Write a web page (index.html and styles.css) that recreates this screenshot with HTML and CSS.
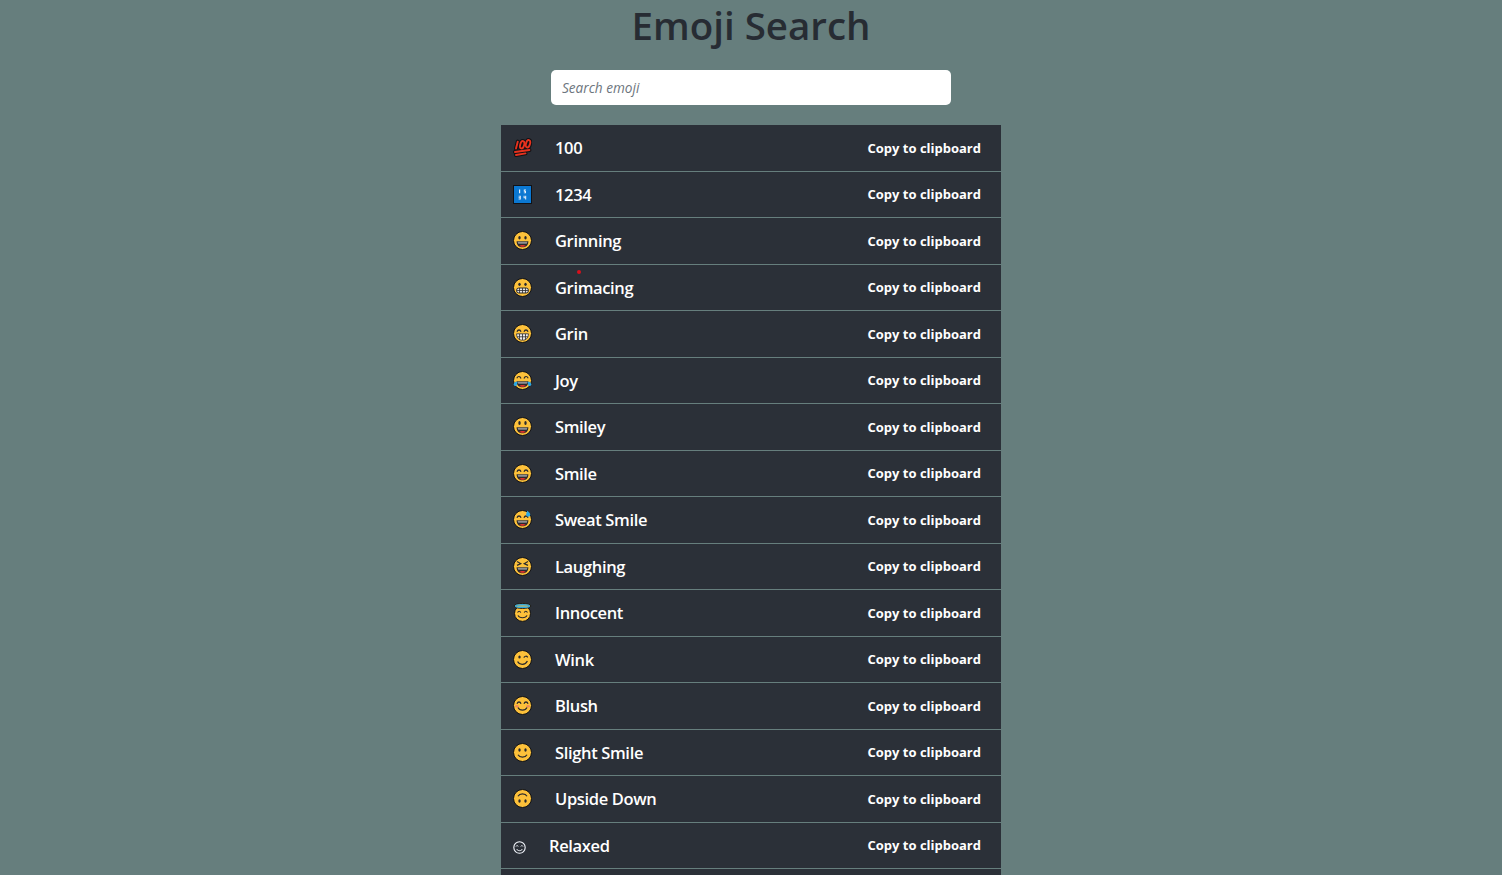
FILE: index.html
```html
<!DOCTYPE html>
<html lang="en">
<head>
<meta charset="utf-8">
<title>Emoji Search</title>
<link rel="stylesheet" href="styles.css">
</head>
<body>
<svg class="defs" width="0" height="0" aria-hidden="true">
  <defs>
    <g id="face"><circle cx="9.5" cy="9.5" r="9" fill="#fdc13a" stroke="#111216" stroke-width="1"/></g>
    <g id="open-mouth"><path d="M3.6 10.2H15.4C15.4 14.6 12.8 16.2 9.5 16.2S3.6 14.6 3.6 10.2Z" fill="#2b2a2c"/><path d="M4.6 10.8H14.4L13.8 12.8H5.2Z" fill="#8f8f92"/><path d="M6.3 15C7.2 13.7 11.8 13.7 12.7 15 11.5 16 7.5 16 6.3 15Z" fill="#e0322c"/></g>
    <g id="arc-eyes"><path d="M4 7.8C4.9 5.4 7.1 5.4 8 7.8M11 7.8C11.9 5.4 14.1 5.4 15 7.8" fill="none" stroke="#2b2a2c" stroke-width="1.3"/></g>
    <symbol id="e100" viewBox="0 0 19 19">
      <g fill="none" stroke="#111216" stroke-width="4" stroke-linecap="round"><path d="M4.8 3.6 3 10.6"/><ellipse cx="9.2" cy="6.8" rx="2" ry="3.8" transform="rotate(16 9.2 6.8)"/><ellipse cx="15" cy="5.8" rx="2" ry="3.8" transform="rotate(16 15 5.8)"/><path d="M2 14 16.4 12M3 17 12.5 15.4"/></g>
      <g fill="none" stroke="#e8321e" stroke-width="1.9" stroke-linecap="round"><path d="M4.8 3.6 3 10.6"/><ellipse cx="9.2" cy="6.8" rx="2" ry="3.8" transform="rotate(16 9.2 6.8)"/><ellipse cx="15" cy="5.8" rx="2" ry="3.8" transform="rotate(16 15 5.8)"/><path d="M2 14 16.4 12M3 17 12.5 15.4"/></g>
    </symbol>
    <symbol id="e1234" viewBox="0 0 19 19">
      <rect x=".5" y=".5" width="18" height="18" fill="#0b78d2" stroke="#111216"/>
      <g fill="#e8f2fb"><path d="M6 4.6H7.2V8.2H6ZM10.8 4.6H13V5.4H11.8V6H13V8.2H10.8V7.4H12V6.8H10.8Z"/><path d="M5.6 10.8H7.8V14.4H5.6V13.6H6.8V13H5.6V12.2H6.8V11.6H5.6ZM10.6 10.8H11.6V12.4H12.2V10.8H13.2V14.4H12.2V13.2H10.6Z"/></g>
    </symbol>
    <symbol id="grinning" viewBox="0 0 19 19"><use href="#face"/><ellipse cx="6.5" cy="6.8" rx="1.2" ry="1.7" fill="#2b2a2c"/><ellipse cx="12.5" cy="6.8" rx="1.2" ry="1.7" fill="#2b2a2c"/><use href="#open-mouth"/></symbol>
    <symbol id="grimacing" viewBox="0 0 19 19"><use href="#face"/><ellipse cx="6.5" cy="6.3" rx="1.2" ry="1.6" fill="#2b2a2c"/><ellipse cx="12.5" cy="6.3" rx="1.2" ry="1.6" fill="#2b2a2c"/><rect x="3.6" y="10" width="11.8" height="5" rx="2.2" fill="#e8e8e8" stroke="#2b2a2c"/><path d="M3.6 12.5H15.4M6.5 10V15M9.5 10V15M12.5 10V15" stroke="#2b2a2c" stroke-width=".8"/></symbol>
    <symbol id="grin" viewBox="0 0 19 19"><use href="#face"/><use href="#arc-eyes"/><path d="M3.6 9.8H15.4C15.4 14 13 16.2 9.5 16.2S3.6 14 3.6 9.8Z" fill="#ececec" stroke="#2b2a2c" stroke-width=".8"/><path d="M4 12.8H15M6.5 10V15.6M9.5 10V16M12.5 10V15.6" stroke="#2b2a2c" stroke-width=".8"/></symbol>
    <symbol id="joy" viewBox="0 0 19 19"><use href="#face"/><path d="M3.8 7.2C5 4.8 7 5 8 7.4M11 7.4C12 5 14 4.8 15.2 7.2" fill="none" stroke="#2b2a2c" stroke-width="1.2"/><use href="#open-mouth"/><path d="M.6 13.2C1.8 9.8 3.8 10.8 4.6 11L3.6 14.8C2.4 15.4 1 15 .6 13.2ZM18.4 13.2C17.2 9.8 15.2 10.8 14.4 11L15.4 14.8C16.6 15.4 18 15 18.4 13.2Z" fill="#2aa7e4"/></symbol>
    <symbol id="smiley" viewBox="0 0 19 19"><use href="#face"/><ellipse cx="6.5" cy="6" rx="1.2" ry="2.1" fill="#2b2a2c"/><ellipse cx="12.5" cy="6" rx="1.2" ry="2.1" fill="#2b2a2c"/><use href="#open-mouth"/></symbol>
    <symbol id="smile" viewBox="0 0 19 19"><use href="#face"/><use href="#arc-eyes"/><use href="#open-mouth"/></symbol>
    <symbol id="sweat" viewBox="0 0 19 19"><use href="#face"/><use href="#arc-eyes"/><use href="#open-mouth"/><path d="M14.4 .8C16.2 2.4 17.8 3.8 17.2 5.6 16.6 7 14.4 7.2 13.4 5.8 12.6 4.4 13.6 2.6 14.4 .8Z" fill="#2aa7e4"/></symbol>
    <symbol id="laughing" viewBox="0 0 19 19"><use href="#face"/><path d="M4 4.4 7.8 6.6 4 8.4M15 4.4 11.2 6.6 15 8.4" fill="none" stroke="#2b2a2c" stroke-width="1.2"/><use href="#open-mouth"/></symbol>
    <symbol id="innocent" viewBox="0 0 19 19"><circle cx="9.5" cy="10.4" r="8" fill="#fdc13a" stroke="#111216"/><ellipse cx="9.5" cy="3" rx="8.4" ry="2.4" fill="#fdc13a" stroke="#111216"/><ellipse cx="9.5" cy="3" rx="7" ry="1.3" fill="none" stroke="#2aa7e4" stroke-width="1.4"/><path d="M4.6 9.6C5.3 7.8 7 7.8 7.8 9.6M11.2 9.6C12 7.8 13.7 7.8 14.4 9.6M5 12.4C6.4 15.6 12.6 15.6 14 12.4" fill="none" stroke="#2b2a2c" stroke-width="1.1"/></symbol>
    <symbol id="wink" viewBox="0 0 19 19"><use href="#face"/><ellipse cx="6.5" cy="7" rx="1.2" ry="1.6" fill="#2b2a2c"/><path d="M10.8 7.6C11.8 5.8 13.6 5.8 14.8 7.4M4.6 11.6C6.2 15.2 12.4 15.4 14.4 11" fill="none" stroke="#2b2a2c" stroke-width="1.2"/></symbol>
    <symbol id="blush" viewBox="0 0 19 19"><use href="#face"/><ellipse cx="3.9" cy="10.2" rx="1.8" ry="1.2" fill="#f08a5a"/><ellipse cx="15.1" cy="10.2" rx="1.8" ry="1.2" fill="#f08a5a"/><use href="#arc-eyes"/><path d="M5 11.6C6.6 15 12.4 15 14 11.6" fill="none" stroke="#2b2a2c" stroke-width="1.2"/></symbol>
    <symbol id="slight" viewBox="0 0 19 19"><use href="#face"/><ellipse cx="6.5" cy="7" rx="1.2" ry="1.7" fill="#2b2a2c"/><ellipse cx="12.5" cy="7" rx="1.2" ry="1.7" fill="#2b2a2c"/><path d="M5 11.8C6.6 14.8 12.4 14.8 14 11.8" fill="none" stroke="#2b2a2c" stroke-width="1.2"/></symbol>
    <symbol id="upside" viewBox="0 0 19 19"><use href="#face"/><ellipse cx="6.5" cy="12" rx="1.2" ry="1.7" fill="#2b2a2c"/><ellipse cx="12.5" cy="12" rx="1.2" ry="1.7" fill="#2b2a2c"/><path d="M5 7.2C6.6 4.2 12.4 4.2 14 7.2" fill="none" stroke="#2b2a2c" stroke-width="1.2"/></symbol>
    <symbol id="relaxed" viewBox="0 0 13 13"><circle cx="6.5" cy="6.5" r="5.7" fill="none" stroke="#f4f7fd" stroke-width="1.1"/><path d="M3 5.4C3.6 4.4 4.6 4.4 5.2 5.4M7.8 5.4C8.4 4.4 9.4 4.4 10 5.4M3.6 8C4.8 10.2 8.2 10.2 9.4 8" fill="none" stroke="#f4f7fd" stroke-width="1"/></symbol>
  </defs>
</svg>
<main class="app">
  <h1 class="title">Emoji Search</h1>
  <div class="search"><input class="search-input" type="text" placeholder="Search emoji"></div>
  <ul class="list">
    <li class="row"><svg class="icon"><use href="#e100"/></svg><span class="name">100</span><span class="copy">Copy to clipboard</span></li>
    <li class="row"><svg class="icon"><use href="#e1234"/></svg><span class="name">1234</span><span class="copy">Copy to clipboard</span></li>
    <li class="row"><svg class="icon"><use href="#grinning"/></svg><span class="name">Grinning</span><span class="copy">Copy to clipboard</span></li>
    <li class="row"><i class="dot"></i><svg class="icon"><use href="#grimacing"/></svg><span class="name">Grimacing</span><span class="copy">Copy to clipboard</span></li>
    <li class="row"><svg class="icon"><use href="#grin"/></svg><span class="name">Grin</span><span class="copy">Copy to clipboard</span></li>
    <li class="row"><svg class="icon"><use href="#joy"/></svg><span class="name">Joy</span><span class="copy">Copy to clipboard</span></li>
    <li class="row"><svg class="icon"><use href="#smiley"/></svg><span class="name">Smiley</span><span class="copy">Copy to clipboard</span></li>
    <li class="row"><svg class="icon"><use href="#smile"/></svg><span class="name">Smile</span><span class="copy">Copy to clipboard</span></li>
    <li class="row"><svg class="icon"><use href="#sweat"/></svg><span class="name">Sweat Smile</span><span class="copy">Copy to clipboard</span></li>
    <li class="row"><svg class="icon"><use href="#laughing"/></svg><span class="name">Laughing</span><span class="copy">Copy to clipboard</span></li>
    <li class="row"><svg class="icon"><use href="#innocent"/></svg><span class="name">Innocent</span><span class="copy">Copy to clipboard</span></li>
    <li class="row"><svg class="icon"><use href="#wink"/></svg><span class="name">Wink</span><span class="copy">Copy to clipboard</span></li>
    <li class="row"><svg class="icon"><use href="#blush"/></svg><span class="name">Blush</span><span class="copy">Copy to clipboard</span></li>
    <li class="row"><svg class="icon"><use href="#slight"/></svg><span class="name">Slight Smile</span><span class="copy">Copy to clipboard</span></li>
    <li class="row"><svg class="icon"><use href="#upside"/></svg><span class="name">Upside Down</span><span class="copy">Copy to clipboard</span></li>
    <li class="row"><svg class="icon icon-small"><use href="#relaxed"/></svg><span class="name">Relaxed</span><span class="copy">Copy to clipboard</span></li>
    <li class="row"></li>
  </ul>
</main>
</body>
</html>
```
FILE: styles.css
```css
* { box-sizing: border-box; }
html, body { margin: 0; padding: 0; }
body {
  background: #667e7d;
  font-family: "Open Sans", "Noto Sans", sans-serif;
  color: #fff;
}
.defs { display: block; height: 0; }
.title {
  margin: 0;
  text-align: center;
  font-size: 38.5px;
  line-height: 50px;
  font-weight: 600;
  color: #272c33;
}
.search { display: flex; justify-content: center; margin-top: 20px; }
.search-input {
  width: 400px;
  height: 35px;
  padding: 0 11px;
  border: 0;
  border-radius: 5px;
  background: #fff;
  font-family: inherit;
  font-size: 13.6px;
  font-style: italic;
}
.search-input::placeholder { color: #6c757d; opacity: 1; }
.list {
  list-style: none;
  width: 500px;
  height: 750px;
  overflow: hidden;
  margin: 20px auto 0;
  padding: 0;
}
.row {
  position: relative;
  display: flex;
  align-items: center;
  height: 46.5px;
  padding: 0 20px 0 12px;
  background: #2b3038;
  border-bottom: 1px solid #667e7d;
}
.icon { width: 19px; height: 19px; margin-right: 23px; flex: none; }
.icon-small { width: 13px; height: 13px; margin: 4px 23px 0 0; }
.name { font-size: 16.5px; font-weight: 600; letter-spacing: -.35px; flex: 1; }
.copy { font-size: 13px; font-weight: 700; }
.dot {
  position: absolute;
  left: 76px;
  top: 5px;
  width: 4px;
  height: 4px;
  border-radius: 50%;
  background: #d8101c;
}
```
